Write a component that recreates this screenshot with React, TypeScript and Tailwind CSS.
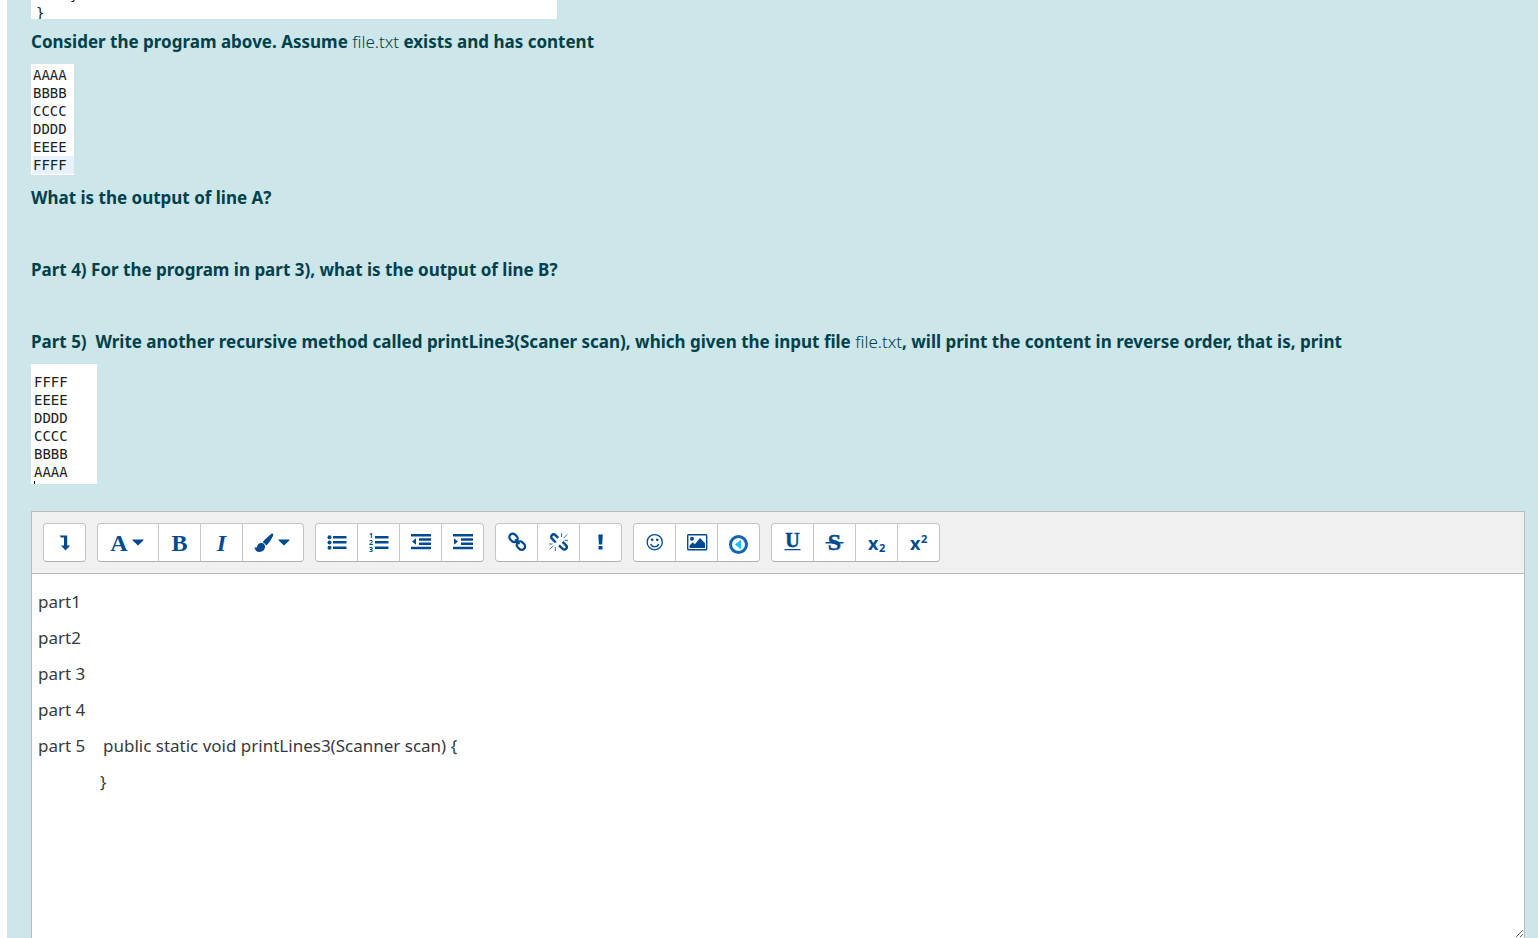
import type { ReactNode } from 'react';

const SERIF = "font-['Liberation_Serif',serif]";
const SANS = "font-['Noto_Sans',sans-serif]";
const MONO = "font-['DejaVu_Sans_Mono',monospace]";

function Icon({ children }: { children: ReactNode }) {
  return (
    <svg width="25" height="25" viewBox="0 0 25 25" fill="currentColor" aria-hidden="true">
      {children}
    </svg>
  );
}

function Caret() {
  return (
    <svg width="12" height="7" viewBox="0 0 12 7" fill="currentColor" aria-hidden="true">
      <path d="M1 .5h10c.6 0 .7.5.3.9L6.6 6.1c-.4.4-.8.4-1.2 0L.7 1.4C.3 1 .4.5 1 .5z" />
    </svg>
  );
}

function Group({ children }: { children: ReactNode }) {
  return (
    <div className="flex h-[39px] divide-x divide-[#c8c8c8] overflow-hidden rounded border border-[#c4c4c4] border-b-[#b0b0b0] bg-white">
      {children}
    </div>
  );
}

function Tool({ label, wide, children }: { label: string; wide?: boolean; children: ReactNode }) {
  return (
    <button
      type="button"
      title={label}
      aria-label={label}
      className={
        (wide ? 'w-[61px] gap-1 pr-0.5 last:w-[60px]' : 'w-[42px] last:w-[41px]') +
        ' flex items-center justify-center text-[#004a8f]'
      }
    >
      {children}
    </button>
  );
}

function Snippet({ children }: { children: ReactNode }) {
  return <pre className={`${MONO} text-sm leading-[18px] font-normal text-[#222]`}>{children}</pre>;
}

function Toolbar() {
  return (
    <div
      role="toolbar"
      aria-label="Editor"
      className="flex flex-wrap gap-[11px] border-b border-[#bbb] bg-[#f0f0f0] p-[11px]"
    >
      <Group>
        <Tool label="Show more buttons">
          <Icon>
            <path d="M7.500 5.500h7.700v10h3L13.500 20.500 8.900 15.500h3.100V7.500H9z" />
          </Icon>
        </Tool>
      </Group>

      <Group>
        <Tool label="Paragraph styles" wide>
          <span className={`${SERIF} text-2xl leading-6 font-bold`}>A</span>
          <Caret />
        </Tool>
        <Tool label="Bold">
          <span className={`${SERIF} text-2xl leading-6 font-bold`}>B</span>
        </Tool>
        <Tool label="Italic">
          <span className={`${SERIF} text-2xl leading-6 font-bold italic`}>I</span>
        </Tool>
        <Tool label="Font colour" wide>
          <svg width="20" height="20" viewBox="0 0 20 20" fill="currentColor" aria-hidden="true">
            <path d="M18.200.600c1.100.100 1.500 1 .900 2.200-1.700 3.300-3.600 6.300-5.500 8.400-.600.700-1.200 1-1.700 1.200-.500-1.500-1.500-2.500-3-3 .200-.700.500-1.200 1.100-1.800C12.200 5.400 14.800 3 17 1.100c.400-.300.800-.500 1.200-.500z" />
            <path d="M7.700 10.100c1.900.200 3.200 1.500 3.300 3.500.100 3.200-2.300 5.400-5.500 5.400-3 0-4.700-1.900-5-5 .800.500 1.300.800 1.800.700.600-.1.700-.800 1-1.600.700-2.100 2.200-3.200 4.400-3z" />
          </svg>
          <Caret />
        </Tool>
      </Group>

      <Group>
        <Tool label="Unordered list">
          <Icon>
            <circle cx="5.500" cy="7.300" r="2" />
            <circle cx="5.500" cy="12.500" r="2" />
            <circle cx="5.500" cy="17.700" r="2" />
            <path d="M9 6h13.500v2.500H9zM9 11h13.500v2.500H9zM9 16.500h13.500V19H9z" />
          </Icon>
        </Tool>
        <Tool label="Ordered list">
          <Icon>
            <g className={`${SANS} text-[7px] font-bold`}>
              <text x="3" y="8">1</text>
              <text x="3" y="15">2</text>
              <text x="3" y="22">3</text>
            </g>
            <path d="M9 6h13.500v2.500H9zM9 11h13.500v2.500H9zM9 16.500h13.500V19H9z" />
          </Icon>
        </Tool>
        <Tool label="Outdent">
          <Icon>
            <path d="M3 4h20v2.500H3zM11 8.200h12v2.500H11zM11 12.500h12v2.500H11zM3 16.800h20v2.500H3zM8 8.300v6.400L4 11.500z" />
          </Icon>
        </Tool>
        <Tool label="Indent">
          <Icon>
            <path d="M3 4h20v2.500H3zM11 8.200h12v2.500H11zM11 12.500h12v2.500H11zM3 16.800h20v2.500H3zM4 8.300v6.400l4-3.200z" />
          </Icon>
        </Tool>
      </Group>

      <Group>
        <Tool label="Link">
          <Icon>
            <g fill="none" stroke="currentColor" strokeWidth="2.200">
              <rect x="5" y="4.500" width="9" height="6.800" rx="3.300" transform="rotate(45 9.500 7.900)" />
              <rect x="12.400" y="12.200" width="9" height="6.800" rx="3.300" transform="rotate(45 16.900 15.600)" />
              <path d="M11 9.500l4.500 4.500" />
            </g>
          </Icon>
        </Tool>
        <Tool label="Unlink">
          <Icon>
            <g fill="none" stroke="currentColor" strokeWidth="2.400">
              <path d="M9.800 12.500L6 8.700c-1.200-1.200-1-2.600 0-3.600 1-1 2.400-1 3.400 0l2.800 2.800" />
              <path d="M16.600 11.900l3.500 3.500c1 1.100 1 2.400 0 3.400s-2.400 1-3.400 0L13 15.300" />
            </g>
            <path
              d="M15.500 7V3.200M17.400 8.300l3.800-3.800M18.500 10.300H22M9.300 17V21M7.500 15.700l-3.800 3.800M6.500 14H3"
              fill="none"
              stroke="currentColor"
              strokeWidth=".8"
            />
          </Icon>
        </Tool>
        <Tool label="Prevent automatic link">
          <Icon>
            <path d="M10.300 4.500h4.500l-.6 10h-3.300zM10.500 16h4v3.500h-4z" />
          </Icon>
        </Tool>
      </Group>

      <Group>
        <Tool label="Emoji picker">
          <Icon>
            <g fill="none" stroke="currentColor" strokeWidth="1.300">
              <circle cx="12.700" cy="12.200" r="7.600" />
              <path d="M8.700 14c.7 1.900 2.200 2.900 4 2.900s3.300-1 4-2.900" />
            </g>
            <circle cx="10.200" cy="9.700" r="1.300" />
            <circle cx="15.200" cy="9.700" r="1.300" />
          </Icon>
        </Tool>
        <Tool label="Insert or edit image">
          <Icon>
            <rect x="3.700" y="4.700" width="19" height="15" rx=".8" fill="none" stroke="currentColor" strokeWidth="1.400" />
            <circle cx="8" cy="8.800" r="2" />
            <path d="M5.500 18v-2.600l3.300-3.200 2 2L16 8l5 5.200V18z" />
          </Icon>
        </Tool>
        <Tool label="Insert media">
          <Icon>
            <circle cx="12.500" cy="14.500" r="8" fill="none" stroke="#1464b4" strokeWidth="3" />
            <path d="M15 9.800v9.400l-6.200-4.700z" fill="#1cc0f4" />
          </Icon>
        </Tool>
      </Group>

      <Group>
        <Tool label="Underline">
          <Icon>
            <text
              x="12.500"
              y="17"
              textAnchor="middle"
              stroke="currentColor"
              strokeWidth=".5"
              className={`${SERIF} text-[20px]`}
            >
              U
            </text>
            <path d="M4.500 19h16v1.300h-16z" />
          </Icon>
        </Tool>
        <Tool label="Strike through">
          <Icon>
            <text
              x="12.500"
              y="20"
              textAnchor="middle"
              stroke="currentColor"
              strokeWidth=".5"
              className={`${SERIF} text-[24px]`}
            >
              S
            </text>
            <path d="M3.500 12h18v1.400h-18z" />
          </Icon>
        </Tool>
        <Tool label="Subscript">
          <Icon>
            <text x="4" y="20" className={`${SANS} text-[18px] font-bold`}>x</text>
            <text x="15" y="22" className={`${SANS} text-[11px] font-bold`}>2</text>
          </Icon>
        </Tool>
        <Tool label="Superscript">
          <Icon>
            <text x="4" y="20" className={`${SANS} text-[18px] font-bold`}>x</text>
            <text x="15" y="13" className={`${SANS} text-[11px] font-bold`}>2</text>
          </Icon>
        </Tool>
      </Group>
    </div>
  );
}

const ANSWER = [
  'part1',
  'part2',
  'part 3',
  'part 4',
  'part 5    public static void printLines3(Scanner scan) {',
  '              }',
].join('\n');

export default function App() {
  return (
    <div className={`${SANS} flex min-h-screen bg-white pl-[7px]`}>
      <main className="flex min-w-0 flex-1 flex-col items-start bg-[#cce6ea] pr-[13px] pl-6 text-[17px] leading-7 font-bold text-[#00414b]">
        <div className="flex h-[19px] w-full max-w-[526px] flex-col justify-end overflow-hidden bg-white pl-[5px]">
          <div className="-mb-[3px]">
            <Snippet>{'    }\n}'}</Snippet>
          </div>
        </div>
        <p className="mt-[9px]">
          Consider the program above. Assume <span className="font-light">file.txt</span> exists and has content
        </p>
        <div className="mt-2 w-[43px] bg-white pt-0.5 pb-px">
          <Snippet>
            <span className="block pl-0.5">{'AAAA\nBBBB\nCCCC\nDDDD\nEEEE'}</span>
            <span className="ml-0.5 block bg-[#e8f2fe]">FFFF</span>
          </Snippet>
        </div>
        <p className="mt-[9px]">What is the output of line A?</p>
        <p className="mt-11">Part 4) For the program in part 3), what is the output of line B?</p>
        <p className="mt-11">
          Part 5)&nbsp; Write another recursive method called printLine3(Scaner scan), which given the input file{' '}
          <span className="font-light">file.txt</span>, will print the content in reverse order, that is, print
        </p>
        <div className="mt-2 w-[66px] bg-white pt-[9px] pl-[3px]">
          <Snippet>{'FFFF\nEEEE\nDDDD\nCCCC\nBBBB\nAAAA'}</Snippet>
          <div className="h-[3px] w-px bg-black" />
        </div>

        <div className="mt-[27px] flex w-full flex-1 flex-col border border-b-0 border-[#bbb] bg-white">
          <Toolbar />
          <textarea
            aria-label="Answer text"
            spellCheck={false}
            defaultValue={ANSWER}
            className="block min-h-64 w-full flex-1 resize-y bg-white px-1.5 pt-2.5 leading-9 font-normal text-[#373a3c] outline-none"
          />
        </div>
      </main>
    </div>
  );
}
